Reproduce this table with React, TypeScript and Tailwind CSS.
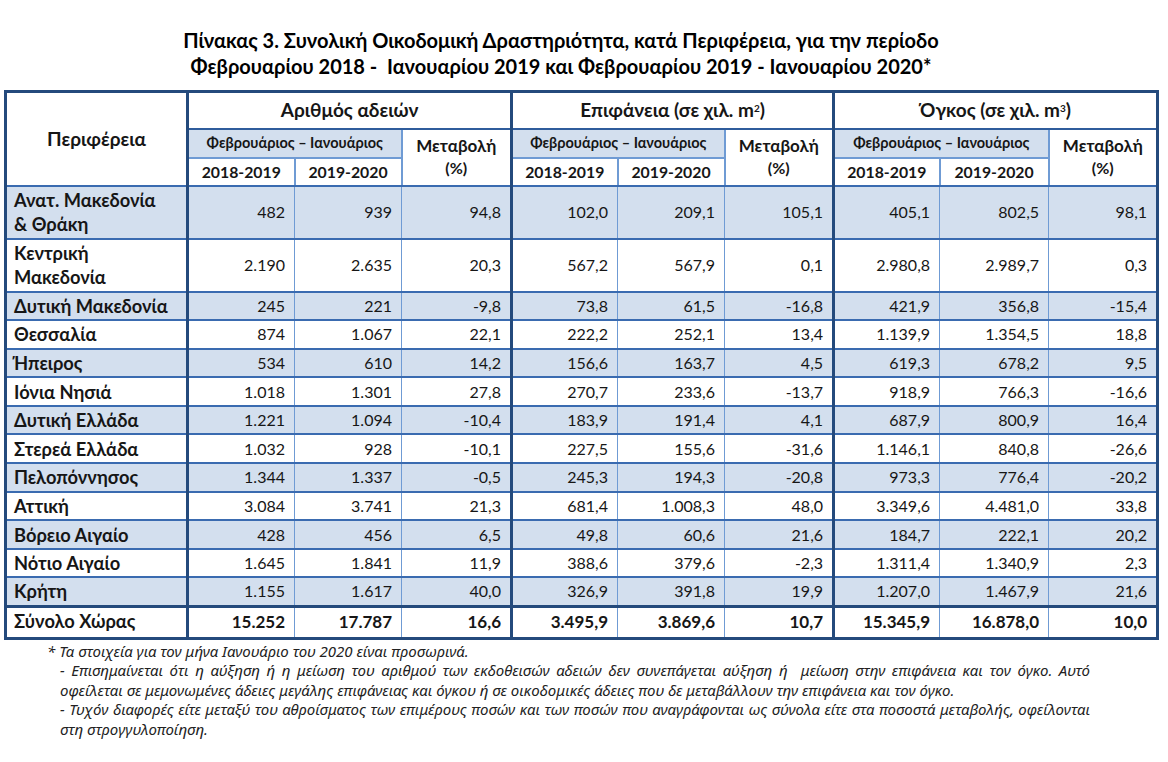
const rows: string[][] = [
  ["Ανατ. Μακεδονία\n& Θράκη", "482", "939", "94,8", "102,0", "209,1", "105,1", "405,1", "802,5", "98,1"],
  ["Κεντρική\nΜακεδονία", "2.190", "2.635", "20,3", "567,2", "567,9", "0,1", "2.980,8", "2.989,7", "0,3"],
  ["Δυτική Μακεδονία", "245", "221", "-9,8", "73,8", "61,5", "-16,8", "421,9", "356,8", "-15,4"],
  ["Θεσσαλία", "874", "1.067", "22,1", "222,2", "252,1", "13,4", "1.139,9", "1.354,5", "18,8"],
  ["Ήπειρος", "534", "610", "14,2", "156,6", "163,7", "4,5", "619,3", "678,2", "9,5"],
  ["Ιόνια Νησιά", "1.018", "1.301", "27,8", "270,7", "233,6", "-13,7", "918,9", "766,3", "-16,6"],
  ["Δυτική Ελλάδα", "1.221", "1.094", "-10,4", "183,9", "191,4", "4,1", "687,9", "800,9", "16,4"],
  ["Στερεά Ελλάδα", "1.032", "928", "-10,1", "227,5", "155,6", "-31,6", "1.146,1", "840,8", "-26,6"],
  ["Πελοπόννησος", "1.344", "1.337", "-0,5", "245,3", "194,3", "-20,8", "973,3", "776,4", "-20,2"],
  ["Αττική", "3.084", "3.741", "21,3", "681,4", "1.008,3", "48,0", "3.349,6", "4.481,0", "33,8"],
  ["Βόρειο Αιγαίο", "428", "456", "6,5", "49,8", "60,6", "21,6", "184,7", "222,1", "20,2"],
  ["Νότιο Αιγαίο", "1.645", "1.841", "11,9", "388,6", "379,6", "-2,3", "1.311,4", "1.340,9", "2,3"],
  ["Κρήτη", "1.155", "1.617", "40,0", "326,9", "391,8", "19,9", "1.207,0", "1.467,9", "21,6"],
];

const total = ["Σύνολο Χώρας", "15.252", "17.787", "16,6", "3.495,9", "3.869,6", "10,7", "15.345,9", "16.878,0", "10,0"];

const groups = [
  { title: <>Αριθμός αδειών</> },
  { title: <>Επιφάνεια (σε χιλ. m<sup className="text-[10px]">2</sup>)</> },
  { title: <>Όγκος (σε χιλ. m<sup className="text-[10px]">3</sup>)</> },
];

// thick group divider before columns 1, 4, 7
const leftEdge = (i: number) =>
  i === 1 || i === 4 || i === 7 ? "border-l-[3px] border-l-[#244a7c]" : "border-l border-l-[#6f9bd4]";

export default function App() {
  return (
    <div className="w-[1168px] h-[762px] bg-white text-[#161616] font-['Lato','Noto_Sans',sans-serif]">
      <h1 className="w-[1122px] pt-[27px] text-center text-[20px] font-bold leading-[26px] text-black">
        Πίνακας 3. Συνολική Οικοδομική Δραστηριότητα, κατά Περιφέρεια, για την περίοδο
        <br />
        <span className="whitespace-pre">Φεβρουαρίου 2018 -  Ιανουαρίου 2019 και Φεβρουαρίου 2019 - Ιανουαρίου 2020*</span>
      </h1>

      <table className="ml-[4px] mt-[11px] w-[1152px] table-fixed border-collapse border-[3px] border-[#244a7c]">
        <colgroup>
          <col className="w-[182px]" />
          <col className="w-[107px]" />
          <col className="w-[107px]" />
          <col className="w-[110px]" />
          <col className="w-[106px]" />
          <col className="w-[107px]" />
          <col className="w-[109px]" />
          <col className="w-[106px]" />
          <col className="w-[109px]" />
          <col className="w-[109px]" />
        </colgroup>
        <thead className="font-bold">
          <tr className="h-[37px]">
            <th rowSpan={3} className="border-b-2 border-b-[#3a6bb0] text-[19px] font-bold">
              Περιφέρεια
            </th>
            {groups.map((g, i) => (
              <th
                key={i}
                colSpan={3}
                className="border-l-[3px] border-l-[#244a7c] border-b-2 border-b-[#2f5c9c] text-[19px] font-bold"
              >
                {g.title}
              </th>
            ))}
          </tr>
          <tr className="h-[29px]">
            {groups.map((_, i) => (
              <>
                <th
                  key={"p" + i}
                  colSpan={2}
                  className="border-l-[3px] border-l-[#244a7c] border-b-2 border-b-[#6f9bd4] bg-[#d3dfee] text-[14.5px] font-bold"
                >
                  Φεβρουάριος – Ιανουάριος
                </th>
                <th
                  key={"m" + i}
                  rowSpan={2}
                  className="border-l-2 border-l-[#6f9bd4] border-b-2 border-b-[#3a6bb0] text-[17px] font-bold leading-[22px]"
                >
                  Μεταβολή
                  <br />
                  <span className="text-[16px]">(%)</span>
                </th>
              </>
            ))}
          </tr>
          <tr className="h-[28px]">
            {groups.map((_, i) => (
              <>
                <th key={"a" + i} className="border-l-[3px] border-l-[#244a7c] border-b-2 border-b-[#3a6bb0] text-[15.8px] font-bold">
                  2018-2019
                </th>
                <th key={"b" + i} className="border-l-2 border-l-[#6f9bd4] border-b-2 border-b-[#3a6bb0] text-[15.8px] font-bold">
                  2019-2020
                </th>
              </>
            ))}
          </tr>
        </thead>
        <tbody className="text-[16px]">
          {rows.map((r, ri) => {
            const tall = r[0].includes("\n");
            return (
              <tr
                key={ri}
                className={`${tall ? "h-[53px]" : "h-[28.6px]"} ${ri % 2 === 0 ? "bg-[#d3dfee]" : "bg-white"}`}
              >
                {r.map((c, ci) =>
                  ci === 0 ? (
                    <td
                      key={ci}
                      className="whitespace-pre-line border-b-2 border-b-[#3a6bb0] pl-[7px] text-left text-[18.3px] font-bold leading-[24px]"
                    >
                      {c}
                    </td>
                  ) : (
                    <td key={ci} className={`${leftEdge(ci)} border-b-2 border-b-[#3a6bb0] pr-[9px] text-right`}>
                      {c}
                    </td>
                  )
                )}
              </tr>
            );
          })}
          <tr className="h-[32px] bg-white font-bold">
            {total.map((c, ci) =>
              ci === 0 ? (
                <td key={ci} className="border-t-[3px] border-t-[#244a7c] pl-[7px] text-left text-[18.3px]">
                  {c}
                </td>
              ) : (
                <td key={ci} className={`${leftEdge(ci)} border-t-[3px] border-t-[#244a7c] pr-[9px] text-right text-[17px]`}>
                  {c}
                </td>
              )
            )}
          </tr>
        </tbody>
      </table>

      <div className="mt-[2px] font-['Noto_Sans',sans-serif] text-[15px] italic leading-[19.5px] text-[#222]">
        <p className="pl-[47px]">* Τα στοιχεία για τον μήνα Ιανουάριο του 2020 είναι προσωρινά.</p>
        <div className="w-[1090px] pl-[60px]">
          <p className="text-justify">
            - Επισημαίνεται ότι η αύξηση ή η μείωση του αριθμού των εκδοθεισών αδειών δεν συνεπάγεται αύξηση ή&nbsp; μείωση
            στην επιφάνεια και τον όγκο. Αυτό οφείλεται σε μεμονωμένες άδειες μεγάλης επιφάνειας και όγκου ή σε οικοδομικές
            άδειες που δε μεταβάλλουν την επιφάνεια και τον όγκο.
          </p>
          <p className="text-justify">
            - Τυχόν διαφορές είτε μεταξύ του αθροίσματος των επιμέρους ποσών και των ποσών που αναγράφονται ως σύνολα είτε στα
            ποσοστά μεταβολής, οφείλονται στη στρογγυλοποίηση.
          </p>
        </div>
      </div>
    </div>
  );
}
